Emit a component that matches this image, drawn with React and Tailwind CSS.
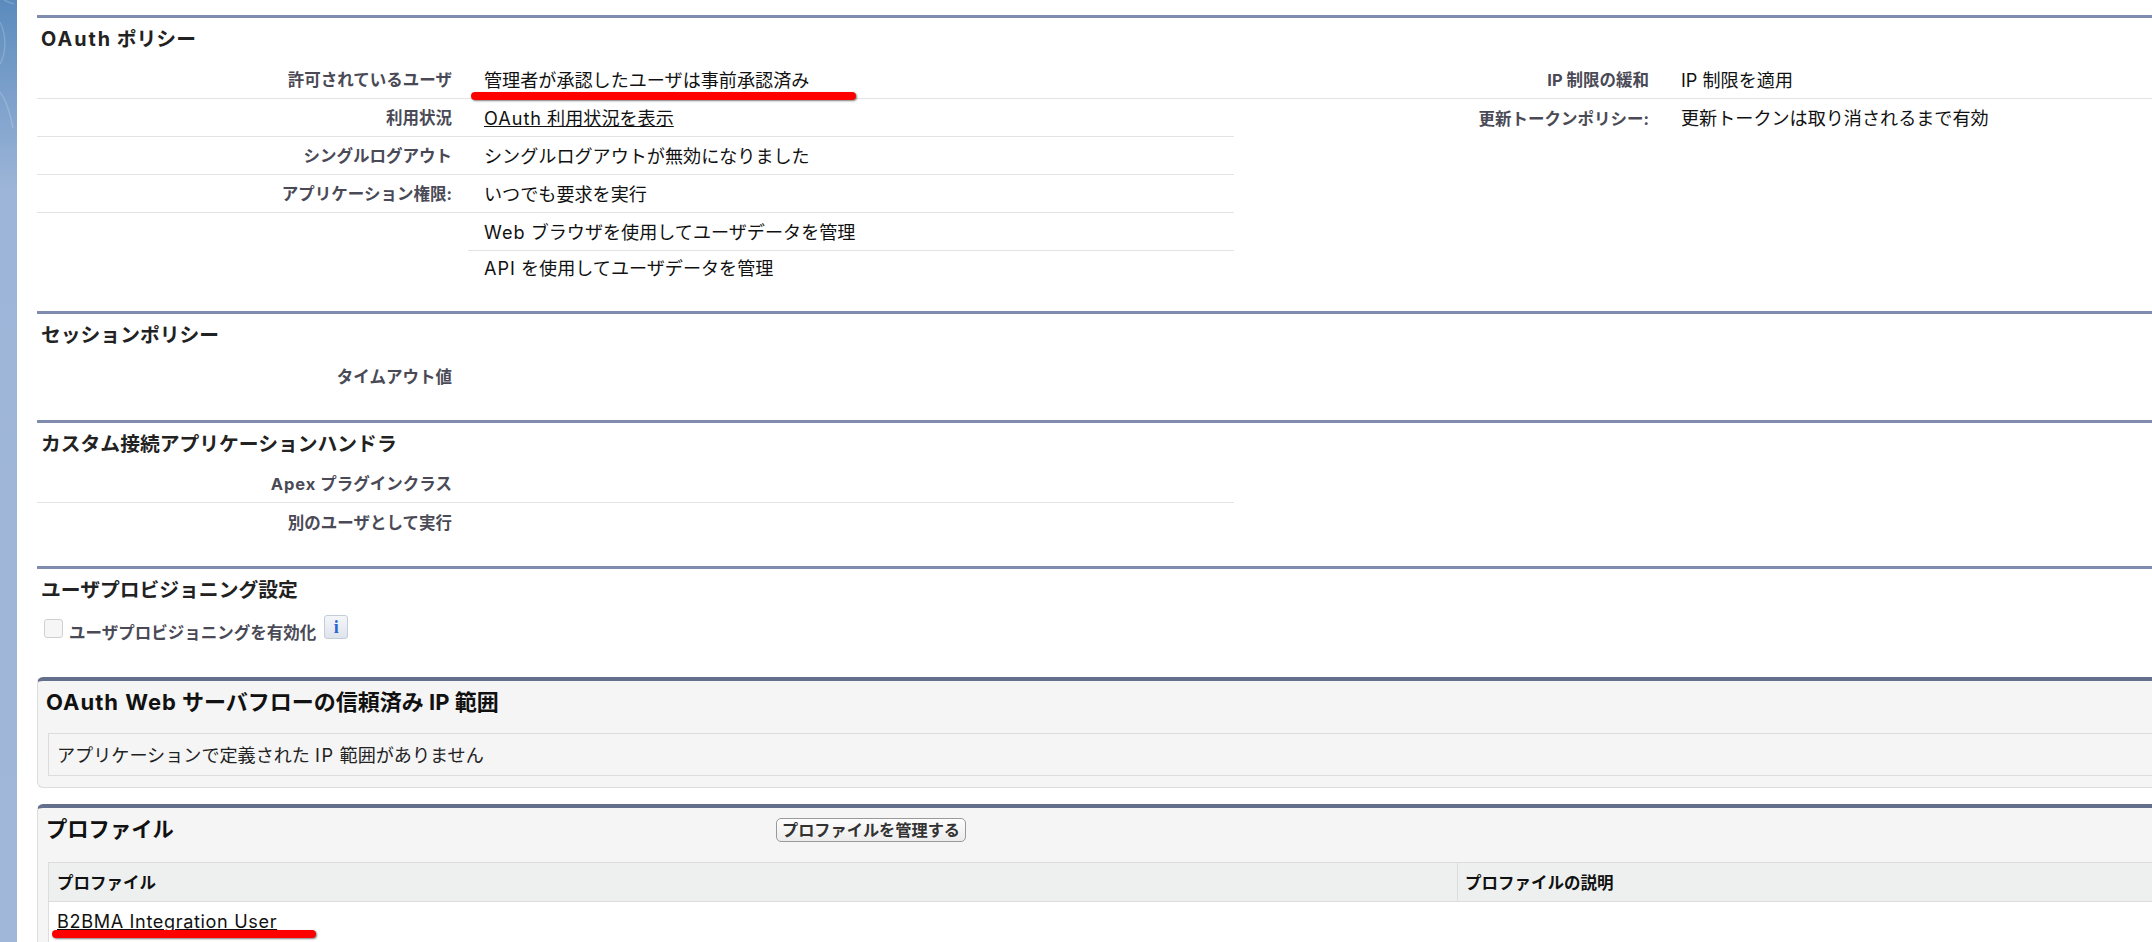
import React from 'react';

const font = 'font-["Inter","Noto_Sans_CJK_JP",sans-serif]';

const RedLine = ({ className }) => (
  <div className={`absolute h-[8px] rounded-full bg-[#fe0000] shadow-[1px_1px_2px_rgba(0,0,0,0.5)] ${className}`} />
);

const Row = ({ label, children, border = true, labelBorder = true, right, height = 'h-[38px]' }) => (
  <div className={`flex ${height}`}>
    <div className={`w-[431px] pr-[16px] pt-[2px] flex items-center justify-end font-bold text-[16.5px] text-[#4a4a56] ${labelBorder && border ? 'border-b border-[#e3e3e3]' : ''}`}>
      <span>{label}</span>
    </div>
    <div className={`w-[766px] pl-[16px] pt-[2px] flex items-center text-[18.1px] text-[#111] ${border ? 'border-b border-[#e3e3e3]' : ''}`}>
      <span>{children}</span>
    </div>
    {right}
  </div>
);

const RightCells = ({ label, value, border }) => (
  <div className={`flex-1 flex ${border ? 'border-b border-[#e3e3e3]' : ''}`}>
    <div className="w-[415px] pt-[2px] flex items-center justify-end font-bold text-[16.5px] text-[#4a4a56]">{label}</div>
    <div className="pl-[32px] pt-[2px] flex items-center text-[18.1px] text-[#111]">{value}</div>
  </div>
);

const SectionTitle = ({ children, className = '' }) => (
  <h3 className={`pl-[4px] font-bold text-[19.8px] leading-[28px] text-[#222] ${className}`}>{children}</h3>
);

export default function App() {
  return (
    <div className={`flex h-[942px] w-[2152px] overflow-hidden bg-white ${font}`}>
      <div className="relative w-[17px] shrink-0 overflow-hidden bg-[linear-gradient(180deg,#5a8bbd_0px,#7a9fca_90px,#9db5d8_190px,#a0b7d9_100%)]">
        <svg width="17" height="200" viewBox="0 0 17 200" fill="none" className="absolute left-0 top-0">
          <path d="M0 22C6 34 7 52 0 64" stroke="#fff" strokeOpacity="0.18" strokeWidth="1.5" />
          <path d="M0 92C6 100 10 112 13 128" stroke="#fff" strokeOpacity="0.18" strokeWidth="1.5" />
          <path d="M4 0C8 2 11 3 14 4" stroke="#fff" strokeOpacity="0.18" strokeWidth="1.5" />
        </svg>
      </div>

      <div className="relative flex-1 pl-[20px] pt-[15px]">
        <section className="h-[296px] border-t-[3px] border-[#7f8cb0]">
          <SectionTitle className="box-content pt-[7px] pb-[8px]">
            <span className="tracking-[2px]">OAuth</span> ポリシー
          </SectionTitle>
          <Row
            label="許可されているユーザ"
            right={<RightCells label="IP 制限の緩和" value="IP 制限を適用" border />}
          >
            管理者が承認したユーザは事前承認済み
          </Row>
          <Row label="利用状況" right={<RightCells label="更新トークンポリシー:" value="更新トークンは取り消されるまで有効" />}>
            <a className="underline"><span className="tracking-[1px]">OAuth</span> 利用状況を表示</a>
          </Row>
          <Row label="シングルログアウト">シングルログアウトが無効になりました</Row>
          <Row label="アプリケーション権限:">いつでも要求を実行</Row>
          <Row labelBorder={false}><span className="tracking-[1px]">Web</span> ブラウザを使用してユーザデータを管理</Row>
          <Row border={false} height="h-[34px]"><span className="tracking-[1px]">API</span> を使用してユーザデータを管理</Row>
        </section>

        <section className="h-[109px] border-t-[3px] border-[#7f8cb0]">
          <SectionTitle className="box-content pt-[7px] pb-[8px]">セッションポリシー</SectionTitle>
          <Row label="タイムアウト値" border={false} />
        </section>

        <section className="h-[146px] border-t-[3px] border-[#7f8cb0]">
          <SectionTitle className="box-content pt-[7px] pb-[7px]">カスタム接続アプリケーションハンドラ</SectionTitle>
          <Row label={<><span className="tracking-[1px]">Apex</span> プラグインクラス</>} />
          <Row label="別のユーザとして実行" border={false} />
        </section>

        <section className="h-[111px] border-t-[3px] border-[#7f8cb0]">
          <SectionTitle className="box-content pt-[7px]">ユーザプロビジョニング設定</SectionTitle>
          <div className="flex pl-[7px] pt-[12px]">
            <span className="mt-[3px] h-[19px] w-[19px] rounded-[3px] border border-[#cfcfcf] bg-[#f6f6f6]" />
            <span className="ml-[6px] mt-[5px] font-bold text-[16.5px] leading-[24px] text-[#4a4a56]">ユーザプロビジョニングを有効化</span>
            <span className="ml-[8px] -mt-[1px] flex h-[24px] w-[24px] items-center justify-center rounded-[3px] border border-[#c4ccd8] bg-gradient-to-b from-[#f4f6f9] to-[#dfe4ec] font-['Liberation_Serif',serif] text-[18px] font-bold text-[#2a64d0]">
              i
            </span>
          </div>
        </section>

        <section className="h-[111px] rounded-l-[6px] border-t-[4px] border-b border-l border-[#dcdcdc] border-t-[#646f8c] bg-[#f5f5f5]">
          <h3 className="pl-[8px] pt-[5px] font-bold text-[22px] leading-[32px] text-[#111]">
            <span className="tracking-[1px]">OAuth Web</span> サーバフローの信頼済み IP 範囲
          </h3>
          <div className="ml-[10px] mt-[15px] flex h-[43px] items-center border-y border-l border-[#dcdcdc] pl-[8px] pt-[2px] text-[18.1px] text-[#222]">
            <span>アプリケーションで定義された <span className="tracking-[1.5px]">IP</span> 範囲がありません</span>
          </div>
        </section>

        <section className="mt-[16px] h-[200px] rounded-tl-[6px] border-t-[4px] border-l border-[#dcdcdc] border-t-[#646f8c] bg-[#f5f5f5]">
          <div className="flex h-[54px] items-center pb-[10px]">
            <h3 className="w-[738px] pl-[8px] font-bold text-[21.3px] text-[#111]">プロファイル</h3>
            <button className="h-[24px] w-[190px] rounded-[5px] border border-[#9a9a9a] bg-gradient-to-b from-[#fdfdfd] to-[#ececec] text-[16.2px] leading-[22px] font-bold text-[#333]">
              プロファイルを管理する
            </button>
          </div>
          <div className="ml-[10px] h-[200px] border-l border-[#dcdcdc] bg-white">
            <div className="flex h-[40px] border-y border-[#dcdcdc] bg-[#eef0ef] pt-[2px] font-bold text-[16.5px] text-[#111]">
              <div className="flex w-[1409px] -mt-[2px] items-center border-r border-[#dcdcdc] pl-[8px] pt-[2px]">プロファイル</div>
              <div className="flex items-center pl-[7px]">プロファイルの説明</div>
            </div>
            <div className="flex h-[40px] items-center pl-[8px] text-[18.1px] text-[#111]">
              <a className="underline tracking-[0.65px]">B2BMA Integration User</a>
            </div>
          </div>
        </section>

        <RedLine className="left-[454px] top-[92px] w-[385px]" />
        <RedLine className="left-[35px] top-[930px] w-[264px]" />
      </div>
    </div>
  );
}
